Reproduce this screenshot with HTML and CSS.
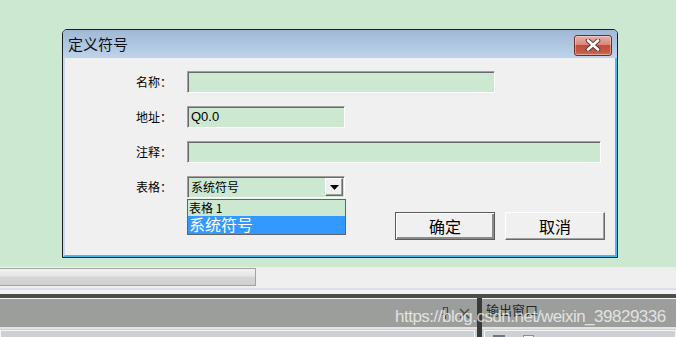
FILE: index.html
```html
<!DOCTYPE html>
<html lang="zh-CN">
<head>
    <meta charset="UTF-8">
    <meta name="viewport" content="width=device-width, initial-scale=1.0">
    <title>定义符号</title>
    <link rel="stylesheet" href="styles.css">
</head>
<body>

<div class="screen">
    <div class="desk">
        <div class="dialog">
            <div class="titlebar">
                <span class="title">定义符号</span>
                <div class="close">
                    <svg width="16" height="12" viewBox="0 0 16 12">
                        <path d="M3 1.5 L13 10.5 M13 1.5 L3 10.5" stroke="#5a3a36" stroke-width="4.6" stroke-linecap="round"/>
                        <path d="M3 1.5 L13 10.5 M13 1.5 L3 10.5" stroke="#ffffff" stroke-width="2.6" stroke-linecap="round"/>
                    </svg>
                </div>
            </div>

            <div class="body">
                <div class="row">
                    <label class="lbl">名称：</label>
                    <div class="field w-name"></div>
                </div>
                <div class="row">
                    <label class="lbl">地址：</label>
                    <div class="field w-addr">Q0.0</div>
                </div>
                <div class="row">
                    <label class="lbl">注释：</label>
                    <div class="field w-note"></div>
                </div>
                <div class="row">
                    <label class="lbl">表格：</label>
                    <div class="combo">
                        <span class="combo-text">系统符号</span>
                        <span class="combo-btn">
                            <svg width="9" height="5" viewBox="0 0 9 5"><path d="M0 0 H9 L4.5 5 Z" fill="#000"/></svg>
                        </span>
                        <!-- lista abierta del combo -->
                        <ul class="droplist">
                            <li>表格 1</li>
                            <li class="sel">系统符号</li>
                        </ul>
                    </div>
                </div>
                <div class="actions">
                    <div class="btn default">确定</div>
                    <div class="btn">取消</div>
                </div>
            </div>
        </div>
    </div>

    <div class="toolbar">
        <div class="hscroll"></div>
    </div>

    <div class="dock">
        <div class="dock-bar"></div>
        <div class="panes">
            <div class="pane left">
                <div class="pane-head">
                    <svg class="pin" width="7" height="12" viewBox="0 0 7 12">
                        <path d="M1.5 0.5 H5.5 V7.5 H1.5 Z M0 7.5 H7 M3.5 7.5 V12" stroke="#4a4a4a" stroke-width="1.2" fill="none"/>
                    </svg>
                    <svg class="x" width="11" height="11" viewBox="0 0 11 11">
                        <path d="M1 1 L10 10 M10 1 L1 10" stroke="#4a4a4a" stroke-width="1.4"/>
                    </svg>
                </div>
                <div class="pane-body"><div class="inner"></div></div>
            </div>
            <div class="splitter"></div>
            <div class="pane right">
                <div class="pane-head"><span class="pane-title">输出窗口</span></div>
                <div class="pane-body">
                    <div class="inner">
                        <span class="ico ico-a"></span>
                        <span class="ico ico-b"></span>
                    </div>
                </div>
            </div>
        </div>
        <div class="watermark">https://blog.csdn.net/weixin_39829336</div>
    </div>
</div>

</body>
</html>
```

FILE: styles.css
```css
body {
    margin: 0;
    font-family: "Noto Sans CJK SC", "Liberation Sans", sans-serif;
    font-size: 12px;
    color: #000;
}
.screen {
    width: 676px;
    height: 337px;
    overflow: hidden;
    display: flex;
    flex-direction: column;
    background-color: #cde8d0;
}
.desk {
    height: 267px;
    flex-shrink: 0;
    box-sizing: border-box;
    padding: 29px 0 0 62px;
    background-color: #cde8d0;
}
.dialog {
    width: 556px;
    height: 229px;
    box-sizing: border-box;
    border: 1px solid #1e1e1e;
    border-radius: 5px 5px 0 0;
    display: flex;
    flex-direction: column;
    overflow: hidden;
}
.titlebar {
    height: 28px;
    flex-shrink: 0;
    display: flex;
    align-items: center;
    justify-content: space-between;
    padding: 0 5px 0 5px;
    background: linear-gradient(#a0b9d6, #b1c8e2 60%, #bfd4eb);
}
.title {
    font-size: 15px;
    line-height: 16px;
    color: #111;
}
.close {
    width: 38px;
    height: 21px;
    box-sizing: border-box;
    margin-top: 2px;
    border: 1px solid #6c2e28;
    border-radius: 3px;
    background: linear-gradient(#e6b0a6, #d8887a 45%, #c14e3b 50%, #c45a45 85%, #d17a63);
    box-shadow: inset 0 0 0 1px rgba(255, 255, 255, 0.35);
    display: flex;
    align-items: center;
    justify-content: center;
}
.body {
    flex: 1;
    position: relative;
    background-color: #f0f0f0;
    border-left: 2px solid #c9d8ee;
    border-right: 2px solid #3cbdea;
    border-bottom: 2px solid #3cbdea;
    padding: 13px 10px 0 0;
    display: flex;
    flex-direction: column;
    gap: 13px;
}
.row {
    display: flex;
    align-items: center;
    gap: 15px;
    height: 22px;
}
.lbl {
    width: 107px;
    text-align: right;
    line-height: 14px;
}
.field {
    height: 22px;
    box-sizing: border-box;
    border: 1px solid;
    border-color: #a0a0a0 #ffffff #ffffff #a0a0a0;
    box-shadow: inset 1px 1px 0 #696969;
    background-color: #cde8d0;
    font-family: "Liberation Sans", sans-serif;
    font-size: 13px;
    line-height: 19px;
    padding-left: 3px;
}
.w-name { width: 308px; }
.w-addr { width: 158px; }
.w-note { width: 414px; }
.combo {
    position: relative;
    width: 158px;
    height: 22px;
    box-sizing: border-box;
    border: 1px solid;
    border-color: #a0a0a0 #ffffff #ffffff #a0a0a0;
    box-shadow: inset 1px 1px 0 #696969;
    background-color: #cde8d0;
    display: flex;
    align-items: center;
    justify-content: space-between;
    padding: 1px 1px 1px 3px;
}
.combo-text {
    line-height: 14px;
}
.combo-btn {
    width: 18px;
    height: 18px;
    box-sizing: border-box;
    border: 1px solid;
    border-color: #ffffff #696969 #696969 #ffffff;
    box-shadow: inset -1px -1px 0 #a0a0a0;
    background-color: #f0f0f0;
    display: flex;
    align-items: center;
    justify-content: center;
}
.droplist {
    position: absolute;
    left: -1px;
    top: 22px;
    width: 159px;
    box-sizing: border-box;
    margin: 0;
    padding: 0;
    list-style: none;
    border: 1px solid #646464;
    background-color: #cde8d0;
    z-index: 2;
}
.droplist li {
    height: 16px;
    line-height: 16px;
    padding-left: 1px;
    font-size: 12px;
}
.droplist li.sel {
    height: 18px;
    line-height: 17px;
    font-size: 16px;
    color: #fff;
    background-color: #3399ff;
}
.actions {
    display: flex;
    justify-content: flex-end;
    gap: 10px;
    margin-top: 1px;
}
.btn {
    width: 100px;
    height: 28px;
    box-sizing: border-box;
    border: 1px solid;
    border-color: #ffffff #696969 #696969 #ffffff;
    box-shadow: inset -1px -1px 0 #a0a0a0;
    background-color: #f0f0f0;
    display: flex;
    align-items: center;
    justify-content: center;
    font-size: 16px;
}
.btn.default {
    border-color: #5a5a5a;
    box-shadow: inset 1px 1px 0 #ffffff, inset -2px -2px 0 #8a8a8a;
}
.toolbar {
    height: 20px;
    flex-shrink: 0;
    background-color: #efefef;
    border-bottom: 2px solid #dadfea;
    padding-top: 1px;
}
.hscroll {
    width: 256px;
    height: 18px;
    box-sizing: border-box;
    border: 1px solid #a3a3a3;
    border-left: none;
    background: linear-gradient(#f1f1f1, #e6e6e6 45%, #d4d4d4 50%, #d0d0d0);
}
.dock {
    position: relative;
    flex: 1;
    border-top: 4px solid #f1f1f1;
    display: flex;
    flex-direction: column;
    background-color: #cdd0d4;
}
.dock-bar {
    height: 4px;
    background-color: #4d4d4d;
}
.panes {
    flex: 1;
    display: flex;
}
.pane {
    display: flex;
    flex-direction: column;
}
.pane.left {
    width: 477px;
}
.pane.right {
    flex: 1;
}
.splitter {
    width: 5px;
    background-color: #3a3a3a;
}
.pane-head {
    height: 28px;
    border-top: 1px solid #f4f4f4;
    border-bottom: 2px solid #e2e4e6;
    background-color: #9c9e9c;
    display: flex;
    align-items: center;
}
.pane.left .pane-head {
    justify-content: flex-end;
    gap: 10px;
    padding-right: 7px;
}
.pane-title {
    padding-left: 4px;
    margin-top: -8px;
    font-size: 13px;
    color: #262626;
}
.pane-body {
    flex: 1;
    background-color: #cdd0d4;
    padding: 1px 2px 0 0;
}
.pane.right .pane-body {
    padding: 1px 0 0 2px;
}
.inner {
    height: 100%;
    box-sizing: border-box;
    border: 1px solid #f6f6f6;
    border-bottom: none;
    position: relative;
}
.ico {
    position: absolute;
    top: 4px;
    width: 12px;
    height: 10px;
}
.ico-a {
    left: 8px;
    border-top: 2px solid #6c7884;
}
.ico-b {
    left: 38px;
    width: 9px;
    border: 1px solid #8a8f96;
    border-bottom: none;
    background-color: #f4f4f4;
}
.watermark {
    position: absolute;
    left: 395px;
    top: 13px;
    font-family: "Liberation Sans", sans-serif;
    font-size: 17px;
    line-height: 20px;
    color: rgba(255, 255, 255, 0.72);
    white-space: nowrap;
    letter-spacing: -0.5px;
}
```
